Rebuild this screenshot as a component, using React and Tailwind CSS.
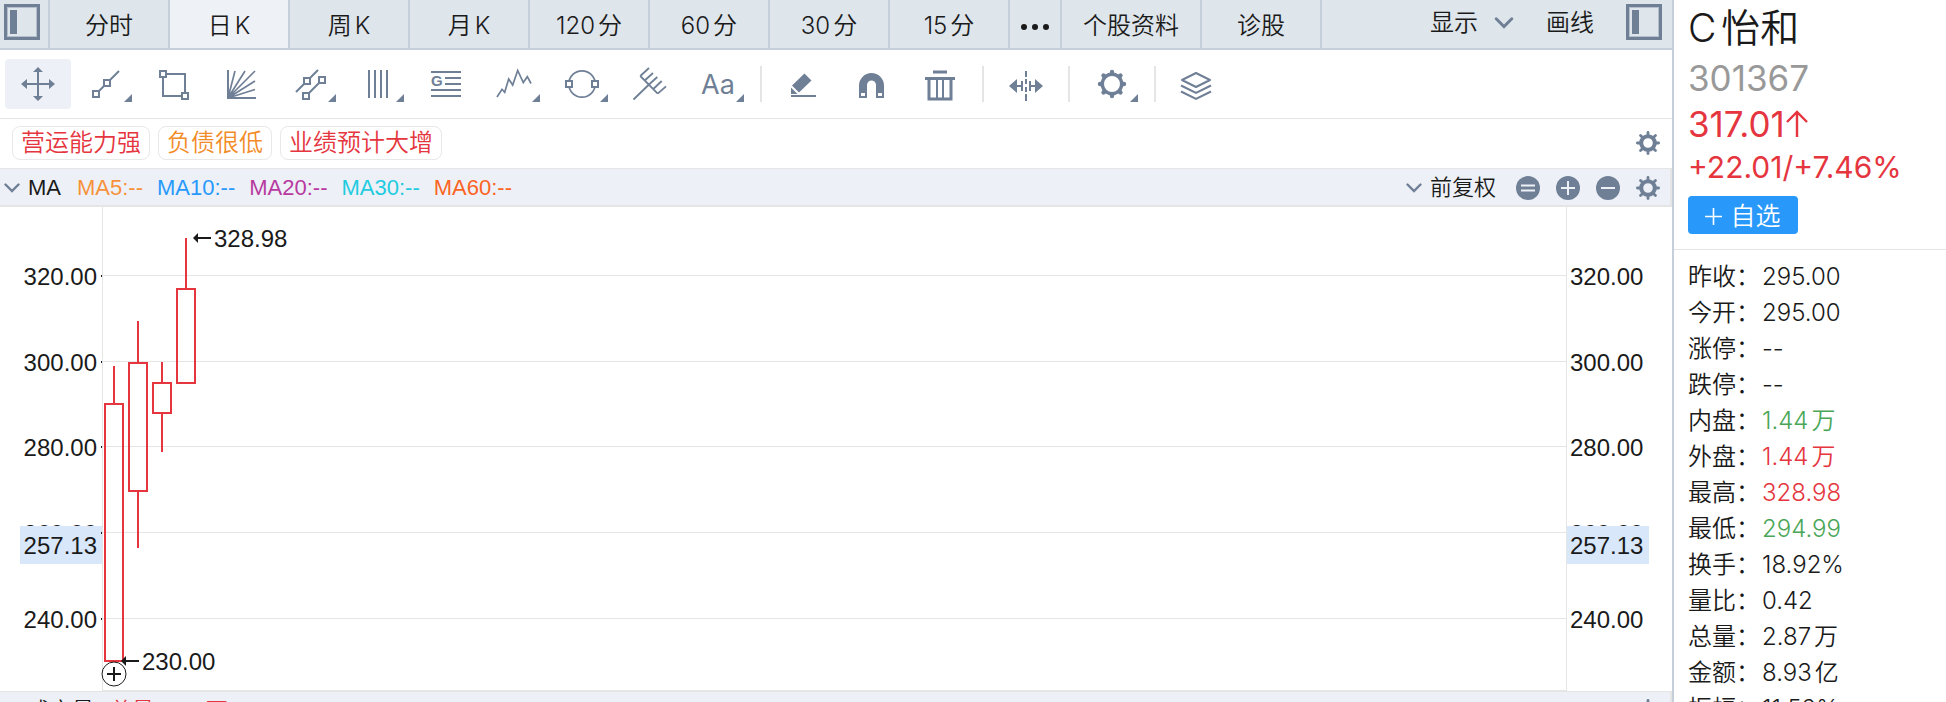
import React from "react";
import { useState } from "react";

const tabs = ["分时", "日K", "周K", "月K", "120分", "60分", "30分", "15分"];

const tags = [
  { text: "营运能力强", color: "text-[#e5353e]" },
  { text: "负债很低", color: "text-[#f28c28]" },
  { text: "业绩预计大增", color: "text-[#e5353e]" },
];

const averages = [
  { text: "MA5:--", color: "text-[#f7913a]" },
  { text: "MA10:--", color: "text-[#2899fb]" },
  { text: "MA20:--", color: "text-[#b83aa0]" },
  { text: "MA30:--", color: "text-[#1fcbe0]" },
  { text: "MA60:--", color: "text-[#fb6424]" },
];

const quotes = [
  { label: "昨收", value: "295.00" },
  { label: "今开", value: "295.00" },
  { label: "涨停", value: "--" },
  { label: "跌停", value: "--" },
  { label: "内盘", value: "1.44万", color: "text-[#4aa657]" },
  { label: "外盘", value: "1.44万", color: "text-[#e5353e]" },
  { label: "最高", value: "328.98", color: "text-[#e5353e]" },
  { label: "最低", value: "294.99", color: "text-[#4aa657]" },
  { label: "换手", value: "18.92%" },
  { label: "量比", value: "0.42" },
  { label: "总量", value: "2.87万" },
  { label: "金额", value: "8.93亿" },
  { label: "振幅", value: "11.52%" },
];

const candles = [
  { open: 230, close: 290, high: 299.1, low: 230 },
  { open: 269.7, close: 299.6, high: 309.6, low: 256.6 },
  { open: 288, close: 295, high: 300, low: 278.8 },
  { open: 295, close: 317.01, high: 328.98, low: 294.99 },
];

const ticks = [320, 300, 280, 260, 240];
const cursorPrice = 257.13;

// price -> y inside the 484px tall chart
const priceY = (price) => Math.round(69 + (320 - price) * 4.283);

const square = (x, y) => (
  <rect x={x - 3} y={y - 3} width="6" height="6" fill="#fff" />
);

const corner = <path d="M59 35V43H51Z" fill="currentColor" stroke="none" />;

const gearTeeth = [0, 45, 90, 135, 180, 225, 270, 315];

const tools = [
  {
    name: "移动",
    icon: (
      <>
        <path d="M20 25H46M33 12V38" />
        <path
          d="M16 25L22 20V30ZM50 25L44 20V30ZM33 8L28 13H38ZM33 42L28 37H38Z"
          fill="currentColor"
          stroke="none"
        />
      </>
    ),
  },
  {
    name: "线段",
    icon: (
      <>
        <path d="M23 35L46 12" />
        {square(23, 35)}
        {square(34, 24)}
        {corner}
      </>
    ),
  },
  {
    name: "矩形",
    icon: (
      <>
        <rect x="22" y="15" width="22" height="22" />
        {square(22, 15)}
        {square(44, 37)}
      </>
    ),
  },
  {
    name: "扇形线",
    icon: (
      <>
        <path d="M19 11V39H47" />
        <path
          d="M19 39L26 12M19 39L36 12M19 39L46 12M19 39L46 22M19 39L46 30.5"
          strokeWidth="1.7"
        />
      </>
    ),
  },
  {
    name: "平行线",
    icon: (
      <>
        <path d="M19 33L41 11M29 37L45 21" />
        {square(30, 22)}
        {square(29, 37)}
        {square(45, 21)}
        {corner}
      </>
    ),
  },
  {
    name: "竖线",
    icon: (
      <>
        <path d="M24 11V39M30 11V39M36 11V39M42 11V39" />
        {corner}
      </>
    ),
  },
  {
    name: "黄金分割",
    icon: (
      <>
        <path d="M18 13H48M32 19H48M32 25H48M18 31H48M18 37H48" />
        <text
          x="18"
          y="27"
          className="font-['Liberation_Sans',sans-serif] text-[15px] font-bold"
          fill="currentColor"
          stroke="none"
        >
          G
        </text>
      </>
    ),
  },
  {
    name: "波浪",
    icon: (
      <>
        <path
          d="M16 38L21 30.3L23.7 33.3L27.7 20L31.7 26L36.7 11.5L42.3 23.5L46.3 17.7L50 24.5"
          strokeWidth="1.7"
        />
        {corner}
      </>
    ),
  },
  {
    name: "圆形",
    icon: (
      <>
        <circle cx="33" cy="25" r="13.2" strokeWidth="1.7" />
        {square(20, 25)}
        {square(46, 25)}
        {corner}
      </>
    ),
  },
  {
    name: "叉形线",
    icon: (
      <path
        d="M16.5 40.5L32 25.5M23.3 17L40.7 34.7M23.3 17L32 9M27.7 21.5L36 14M32 25.5L40.3 18M36.3 30L44.7 22M40.7 34.7L49 27.3"
        strokeWidth="1.8"
      />
    ),
  },
  {
    name: "文字",
    icon: (
      <>
        <text
          x="16"
          y="35"
          className="font-[Inter,sans-serif] text-[27px] font-normal"
          fill="currentColor"
          stroke="none"
        >
          Aa
        </text>
        {corner}
      </>
    ),
  },
  { name: "sep1" },
  {
    name: "橡皮",
    icon: (
      <>
        <path
          d="M33.5 14.5L40.5 21.5L28 33.5L21 26.5ZM20 28.5L26.5 35H20Z"
          fill="currentColor"
          stroke="none"
        />
        <path d="M20 37H45" />
      </>
    ),
  },
  {
    name: "磁铁",
    icon: (
      <>
        <path
          d="M20 39V26.5A12.5 12.5 0 0 1 45 26.5V39H37V26A4.5 4.5 0 0 0 28 26V39Z"
          fill="currentColor"
          stroke="none"
        />
        <path d="M22 34H26V37H22ZM39 34H43V37H39Z" fill="#fff" stroke="none" />
      </>
    ),
  },
  {
    name: "删除",
    icon: (
      <>
        <path d="M26 13H40M18 19.5H48" strokeWidth="3" />
        <path d="M22 20V40H44V20" strokeWidth="3" />
        <path d="M30 20V40M36 20V40" />
      </>
    ),
  },
  { name: "sep2" },
  {
    name: "间距",
    icon: (
      <>
        <path d="M33 12V18M33 20V25M33 28V33M33 35V42" />
        <path d="M22 27H28M29 22V32M37 22V32M38 27H44" />
        <path
          d="M16 27L24 20V34ZM50 27L42 20V34Z"
          fill="currentColor"
          stroke="none"
        />
      </>
    ),
  },
  { name: "sep3" },
  {
    name: "设置",
    icon: (
      <>
        <circle cx="33" cy="25" r="9.7" strokeWidth="3.4" />
        {gearTeeth.map((angle) => (
          <path
            key={angle}
            d="M33 14.5V13"
            strokeWidth="4.4"
            strokeLinecap="round"
            transform={`rotate(${angle} 33 25)`}
          />
        ))}
        {corner}
      </>
    ),
  },
  { name: "sep4" },
  {
    name: "图层",
    icon: (
      <>
        <path d="M31 14L45 21L31 28L17 21Z" strokeLinejoin="round" />
        <path d="M16 26.5L31 34L46 26.5M16 32.5L31 40L46 32.5" />
      </>
    ),
  },
];

function PanelIcon() {
  return (
    <svg className="size-9" viewBox="0 0 36 36" fill="none">
      <rect x="1.5" y="1.5" width="33" height="33" stroke="#6f7f96" strokeWidth="3" />
      <rect x="3.5" y="3.5" width="29" height="29" stroke="#b5bfcc" />
      <rect x="6" y="6" width="7" height="24" fill="#6f7f96" />
    </svg>
  );
}

function Chevron({ className }) {
  return (
    <svg className={className} viewBox="0 0 16 10" fill="none">
      <path
        d="M1.5 1.5L8 8L14.5 1.5"
        stroke="#6f7f96"
        strokeWidth="2.4"
        strokeLinecap="round"
      />
    </svg>
  );
}

function GearIcon() {
  return (
    <svg className="size-6" viewBox="0 0 24 24" fill="none" stroke="#6f7f96">
      <circle cx="12" cy="12" r="6.8" strokeWidth="4" />
      {gearTeeth.map((angle) => (
        <path
          key={angle}
          d="M12 4V1.4"
          strokeWidth="2.8"
          strokeLinecap="round"
          transform={`rotate(${angle} 12 12)`}
        />
      ))}
    </svg>
  );
}

function RoundIcon({ d }) {
  return (
    <svg className="size-6" viewBox="0 0 24 24" fill="none">
      <circle cx="12" cy="12" r="12" fill="#6f7f96" />
      <path d={d} stroke="#edf1f7" strokeWidth="2" />
    </svg>
  );
}

function TopBar() {
  const [active, setActive] = useState("日K");

  return (
    <nav className="flex h-[50px] border-b-2 border-[#c5cfda] bg-[#dee5eb]">
      <button
        aria-label="左侧面板"
        className="flex w-[50px] items-start border-r-2 border-[#c5cfda] pt-1 pl-1"
      >
        <PanelIcon />
      </button>
      {tabs.map((tab) => (
        <button
          key={tab}
          onClick={() => setActive(tab)}
          className={`w-[120px] border-r-2 border-[#c5cfda] pt-1 ${
            tab === active ? "bg-[#eef2f7]" : ""
          }`}
        >
          {tab}
        </button>
      ))}
      <button
        aria-label="更多"
        className="flex w-[52px] items-center justify-center border-r-2 border-[#c5cfda] pt-1.5"
      >
        <svg className="h-2 w-[30px]" viewBox="0 0 30 8" fill="#1a1a1a">
          <circle cx="4" cy="4" r="3" />
          <circle cx="15" cy="4" r="3" />
          <circle cx="26" cy="4" r="3" />
        </svg>
      </button>
      <button className="w-[140px] border-r-2 border-[#c5cfda] pt-1">
        个股资料
      </button>
      <button className="w-[120px] border-r-2 border-[#c5cfda] pt-1">
        诊股
      </button>
      <div className="ml-auto flex items-start pr-2.5">
        <button className="flex h-[46px] items-center gap-4">
          显示
          <Chevron className="h-3 w-5" />
        </button>
        <button className="ml-8 h-[46px]">画线</button>
        <button aria-label="右侧面板" className="ml-7 pt-1 pl-1">
          <PanelIcon />
        </button>
      </div>
    </nav>
  );
}

function Toolbar() {
  return (
    <div className="flex h-[69px] items-center gap-0.5 border-b border-[#e5e5e5] pl-[5px] text-[#6f7f96]">
      {tools.map((tool, index) =>
        tool.icon ? (
          <button
            key={tool.name}
            aria-label={tool.name}
            className={`rounded ${index === 0 ? "bg-[#edf1f7]" : ""}`}
          >
            <svg
              className="h-[50px] w-[66px]"
              viewBox="0 0 66 50"
              fill="none"
              stroke="currentColor"
              strokeWidth="2"
            >
              {tool.icon}
            </svg>
          </button>
        ) : (
          <div key={tool.name} className="mx-[7px] h-9 w-0.5 bg-[#e5e5e5]" />
        )
      )}
    </div>
  );
}

function TagRow() {
  return (
    <div className="flex h-[50px] items-center gap-2 border-b border-[#e5e5e5] px-3 pb-px">
      {tags.map((tag) => (
        <span
          key={tag.text}
          className={`flex h-[34px] items-center rounded-lg border border-[#e8e8e8] px-2 ${tag.color}`}
        >
          {tag.text}
        </span>
      ))}
      <button aria-label="标签设置" className="ml-auto">
        <GearIcon />
      </button>
    </div>
  );
}

function PanelActions() {
  return (
    <div className="flex gap-4">
      <button aria-label="还原">
        <RoundIcon d="M5 9.5H19M5 14.5H19" />
      </button>
      <button aria-label="放大">
        <RoundIcon d="M5 12H19M12 5V19" />
      </button>
      <button aria-label="缩小">
        <RoundIcon d="M5 12H19" />
      </button>
      <button aria-label="指标设置">
        <GearIcon />
      </button>
    </div>
  );
}

function IndicatorBar() {
  return (
    <div className="flex h-[38px] items-center border-r-2 border-b-2 border-[#e5e5e5] bg-[#edf1f7] pt-0.5 pr-2.5 pl-1 font-['Liberation_Sans','Noto_Sans_CJK_SC',sans-serif] text-[22px]">
      <button className="flex items-center gap-2">
        <Chevron className="h-2.5 w-4" />
        MA
      </button>
      <div className="ml-4 flex gap-3.5">
        {averages.map((item) => (
          <span key={item.text} className={item.color}>
            {item.text}
          </span>
        ))}
      </div>
      <button className="mr-5 ml-auto flex items-center gap-2">
        <Chevron className="h-2.5 w-4" />
        前复权
      </button>
      <PanelActions />
    </div>
  );
}

function AxisLabels({ x, anchor, boxX }) {
  return (
    <>
      {ticks.map((tick) => (
        <text key={tick} x={x} y={priceY(tick) + 9} textAnchor={anchor}>
          {tick.toFixed(2)}
        </text>
      ))}
      <rect
        x={boxX}
        y={priceY(cursorPrice) - 19}
        width="82"
        height="38"
        fill="#d8e8fa"
      />
      <text x={x} y={priceY(cursorPrice) + 9} textAnchor={anchor}>
        {cursorPrice.toFixed(2)}
      </text>
    </>
  );
}

function PriceNote({ x, price }) {
  const y = priceY(price);
  return (
    <g>
      <path d={`M${x} ${y}L${x + 5} ${y - 5}V${y + 5}Z`} />
      <path d={`M${x + 4} ${y}H${x + 18}`} stroke="#1a1a1a" strokeWidth="2" />
      <text x={x + 21} y={y + 9}>
        {price.toFixed(2)}
      </text>
    </g>
  );
}

function Chart() {
  return (
    <div className="flex h-[484px] font-['Liberation_Sans',sans-serif] text-2xl">
      <svg className="h-full w-[102px] shrink-0" fill="#1a1a1a">
        <AxisLabels x={97} anchor="end" boxX={20} />
        {ticks.map((tick) => (
          <rect key={tick} x="101" y={priceY(tick) - 1} width="1" height="2" />
        ))}
      </svg>
      <div className="min-w-0 flex-1 border-x border-b border-[#e5e5e5]">
        <svg className="h-full w-full overflow-visible" fill="#1a1a1a">
          {ticks.map((tick) => (
            <rect
              key={tick}
              y={priceY(tick) - 1}
              width="100%"
              height="1"
              fill="#e5e5e5"
            />
          ))}
          {candles.map((candle, index) => {
            const x = 11 + index * 24;
            const top = priceY(candle.close);
            const bottom = priceY(candle.open);
            return (
              <g key={x} fill="none" stroke="#e5353e" strokeWidth="2">
                <rect x={x - 9} y={top} width="18" height={bottom - top} />
                <path
                  d={`M${x} ${priceY(candle.high)}V${top}M${x} ${bottom}V${priceY(
                    candle.low
                  )}`}
                />
              </g>
            );
          })}
          <PriceNote x={90} price={328.98} />
          <PriceNote x={18} price={230} />
          <circle cx="11" cy="467" r="12" fill="#fff" stroke="#1a1a1a" />
          <path d="M4 467H18M11 460V474" stroke="#1a1a1a" strokeWidth="2" />
        </svg>
      </div>
      <svg className="h-full w-[105px] shrink-0" fill="#1a1a1a">
        <AxisLabels x={3} anchor="start" boxX={0} />
      </svg>
    </div>
  );
}

function VolumeBar() {
  return (
    <div className="flex h-[38px] items-center border-t border-r-2 border-[#e5e5e5] bg-[#edf1f7] pr-2.5 pl-1 font-['Liberation_Sans','Noto_Sans_CJK_SC',sans-serif] text-[22px]">
      <button className="flex items-center gap-2">
        <Chevron className="h-2.5 w-4" />
        成交量
      </button>
      <span className="ml-4 text-[#e5353e]">总量:2.87万</span>
      <button aria-label="成交量设置" className="ml-auto">
        <GearIcon />
      </button>
    </div>
  );
}

function QuotePanel() {
  return (
    <aside className="w-[274px] shrink-0 border-l-2 border-[#c5cfda]">
      <header className="h-[250px] border-b border-[#e5e5e5] pl-3.5 text-[#e5353e]">
        <h1 className="h-14 text-[39px] leading-14 text-[#1a1a1a]">C怡和</h1>
        <p className="h-[46px] text-[35px] leading-[44px] font-normal text-[#999999]">
          301367
        </p>
        <p className="flex h-[46px] items-center pb-0.5 text-[35px] font-normal">
          317.01
          <svg className="h-7 w-6" viewBox="0 0 24 28" fill="none">
            <path
              d="M12 27V2M2 12L12 2L22 12"
              stroke="currentColor"
              strokeWidth="2.4"
            />
          </svg>
        </p>
        <p className="h-12 text-[30px] leading-[38px] font-normal">
          +22.01/+7.46%
        </p>
        <button className="flex h-[38px] w-[110px] items-center justify-center gap-2 rounded bg-[#2899fb] pt-0.5 text-[25px] text-white">
          <svg className="size-[17px]" viewBox="0 0 17 17" fill="none">
            <path d="M0 8.5H17M8.5 0V17" stroke="currentColor" strokeWidth="1.6" />
          </svg>
          自选
        </button>
      </header>
      <dl className="pt-[9px] pl-3.5">
        {quotes.map((quote) => (
          <div key={quote.label} className="flex h-9 items-center">
            <dt className="w-[74px] shrink-0">{quote.label}：</dt>
            <dd className={quote.color}>{quote.value}</dd>
          </div>
        ))}
      </dl>
    </aside>
  );
}

export default function App() {
  return (
    <div className="flex h-screen overflow-hidden bg-white font-[Inter,'Noto_Sans_CJK_SC',sans-serif] text-2xl leading-none font-[350] text-[#1a1a1a] [text-autospace:normal]">
      <main className="min-w-0 flex-1">
        <TopBar />
        <Toolbar />
        <TagRow />
        <IndicatorBar />
        <Chart />
        <VolumeBar />
      </main>
      <QuotePanel />
    </div>
  );
}
